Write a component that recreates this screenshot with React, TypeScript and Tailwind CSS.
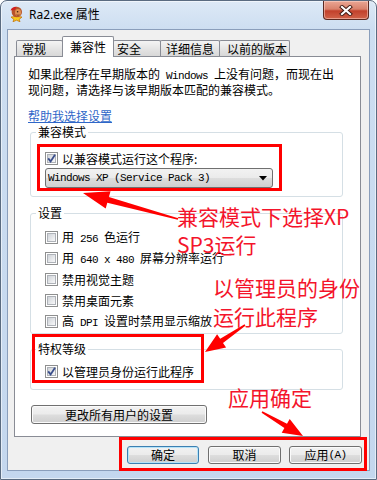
import type { ReactNode } from 'react';

const M = ({ children }: { children: ReactNode }) => (
  <span className="font-['Liberation_Mono',monospace] text-[11px] tracking-[-0.6px]">{children}</span>
);

function CheckBox({ checked = false }: { checked?: boolean }) {
  return (
    <span className="flex h-[13px] w-[13px] shrink-0 items-center justify-center border border-[#8e8f8f] bg-white">
      <span className="relative h-[9px] w-[9px] border border-[#aeb2b8] bg-[linear-gradient(135deg,#cfd3d8,#f8f8f9)]">
        {checked && (
          <svg className="absolute -left-[2px] -top-[2px]" width="11" height="11" viewBox="0 0 11 11">
            <path d="M2.2 5.4 L4.6 8.4 L9 1.8" fill="none" stroke="#3b4f8c" strokeWidth="1.8" />
          </svg>
        )}
      </span>
    </span>
  );
}

function Row({ checked, children }: { checked?: boolean; children: ReactNode }) {
  return (
    <div className="flex h-[13px] items-center">
      <CheckBox checked={checked} />
      <span className="ml-[4px] whitespace-nowrap leading-[14px]">{children}</span>
    </div>
  );
}

function Group({ label, className, children }: { label: string; className: string; children: ReactNode }) {
  return (
    <div className={`relative ml-[2px] w-[313px] rounded-[3px] border border-[#d5dfe5] ${className}`}>
      <span className="absolute -top-[8px] left-[5px] bg-white px-[2px] leading-[14px]">{label}</span>
      {children}
    </div>
  );
}

function Btn({ children, focused, className }: { children: ReactNode; focused?: boolean; className: string }) {
  return (
    <div
      className={`flex items-center justify-center rounded-[3px] border bg-[linear-gradient(to_bottom,#f2f2f2_0%,#ebebeb_48%,#dddddd_52%,#cfcfcf_100%)] leading-[14px] ${
        focused ? 'border-[#3c7fb1] shadow-[inset_0_0_0_1px_#b5e3f8]' : 'border-[#707070] shadow-[inset_0_0_0_1px_#fbfbfb]'
      } ${className}`}
    >
      {children}
    </div>
  );
}

function Tab({ label, active, className }: { label: string; active?: boolean; className: string }) {
  return (
    <div
      className={`flex items-center whitespace-nowrap rounded-t-[2px] border border-b-0 border-[#898c95] leading-[14px] ${
        active
          ? 'relative z-10 -mb-px h-[21px] justify-center bg-white'
          : 'h-[16px] bg-[linear-gradient(to_bottom,#f4f4f4,#e2e2e2_60%,#d8d8d8)]'
      } ${className}`}
    >
      {label}
    </div>
  );
}

function AppIcon() {
  return (
    <svg width="17" height="17" viewBox="0 0 17 17">
      <polygon points="8.5,8 10.2,11.6 14,12 11.2,14.4 12,16.8 8.5,15.2 5,16.8 5.8,14.4 3,12 6.8,11.6" fill="#f6c81c" stroke="#c06a00" strokeWidth="0.7" />
      <circle cx="8.8" cy="7" r="5.2" fill="#b8542a" />
      <ellipse cx="10" cy="7.5" rx="3" ry="3.4" fill="#e09050" />
      <path d="M2.5 5.5 Q4 1.5 8.5 1.8 L7 5 Z" fill="#d11f1f" />
      <circle cx="9.6" cy="6.8" r="0.8" fill="#3a1a0a" />
      <path d="M8.5 9.8 Q10 10.8 11.5 9.8" stroke="#6a2a10" strokeWidth="0.8" fill="none" />
    </svg>
  );
}

export default function App() {
  return (
    <div className="relative h-[480px] w-[377px] overflow-hidden font-['Noto_Sans_CJK_SC',sans-serif] text-[12px] text-black">
      <div className="flex h-full flex-col rounded-t-[7px] border border-[#5a6b80] bg-[linear-gradient(to_bottom,#dde9f6_0px,#cddef1_28px,#c4d7ee_100%)] shadow-[inset_0_0_0_1px_rgba(255,255,255,0.55)]">
        {/* title bar */}
        <div className="flex h-[28px] shrink-0 items-start">
          <div className="ml-[7px] mt-[4px]">
            <AppIcon />
          </div>
          <div className="ml-[4px] mt-[7px] whitespace-nowrap font-['Noto_Sans','Noto_Sans_CJK_SC',sans-serif] leading-[14px]">
            Ra2.exe 属性
          </div>
          <div className="ml-auto mr-[7px] flex h-[19px] w-[46px] items-center justify-center rounded-b-[4px] border border-t-0 border-[#5b2a22] bg-[linear-gradient(to_bottom,#eaa694_0%,#d9826c_45%,#c2412c_55%,#d1634a_100%)] shadow-[inset_0_0_0_1px_rgba(255,220,210,0.5)]">
            <svg width="14" height="11" viewBox="0 0 14 11">
              <path d="M3 2 L11 9 M11 2 L3 9" stroke="#3d1710" strokeWidth="4" strokeLinecap="square" />
              <path d="M3 2 L11 9 M11 2 L3 9" stroke="#ffffff" strokeWidth="2.2" strokeLinecap="square" />
            </svg>
          </div>
        </div>

        {/* client area */}
        <div className="mx-[6px] flex h-[442px] flex-col border border-[#8a9ebb] bg-[#f0f0f0] pl-[6px] pr-[8px] pt-[6px]">
          <div className="flex h-[20px] items-end">
            <Tab label="常规" className="ml-[2px] w-[47px] pl-[5px]" />
            <Tab label="兼容性" active className="-ml-px w-[52px]" />
            <Tab label="安全" className="-ml-px w-[48px] pl-[3px]" />
            <Tab label="详细信息" className="-ml-px w-[60px] pl-[5px]" />
            <Tab label="以前的版本" className="-ml-px w-[71px] pl-[7px]" />
          </div>

          <div className="flex h-[381px] w-[347px] flex-col border border-[#898c95] bg-white pl-[13px] pt-[10px]">
            <div className="whitespace-nowrap leading-[14px]">
              如果此程序在早期版本的<M> Windows </M>上没有问题，而现在出
            </div>
            <div className="whitespace-nowrap leading-[14px]">现问题，请选择与该早期版本匹配的兼容模式。</div>
            <div className="mt-[12px] w-fit leading-[14px] text-[#2f67c8] underline">帮助我选择设置</div>

            <Group label="兼容模式" className="mt-[9px] h-[65px] pl-[14px] pt-[19px]">
              <Row checked>以兼容模式运行这个程序:</Row>
              <div className="mt-[3px] flex h-[20px] w-[228px] items-center justify-between rounded-[3px] border border-[#707070] bg-[linear-gradient(to_bottom,#f2f2f2_0%,#ebebeb_48%,#dddddd_52%,#cfcfcf_100%)] pl-[2px] pr-[5px]">
                <span className="whitespace-nowrap font-['Liberation_Mono',monospace] text-[11px] tracking-[-0.6px]">
                  Windows XP (Service Pack 3)
                </span>
                <svg width="8" height="5" viewBox="0 0 8 5">
                  <polygon points="0,0 8,0 4,4.5" fill="#000" />
                </svg>
              </div>
            </Group>

            <Group label="设置" className="mt-[16px] flex h-[121px] flex-col gap-[8px] pl-[14px] pt-[17px]">
              <Row>
                用<M> 256 </M>色运行
              </Row>
              <Row>
                用<M> 640 x 480 </M>屏幕分辨率运行
              </Row>
              <Row>禁用视觉主题</Row>
              <Row>禁用桌面元素</Row>
              <Row>
                高<M> DPI </M>设置时禁用显示缩放
              </Row>
            </Group>

            <Group label="特权等级" className="mt-[15px] h-[41px] pl-[14px] pt-[15px]">
              <Row checked>以管理员身份运行此程序</Row>
            </Group>

            <Btn className="ml-[3px] mt-[15px] h-[19px] w-[176px]">更改所有用户的设置</Btn>
          </div>

          <div className="-mr-px mt-[9px] flex justify-end">
            <Btn focused className="h-[18px] w-[72px]">
              确定
            </Btn>
            <Btn className="ml-[9px] h-[18px] w-[73px]">取消</Btn>
            <Btn className="ml-[8px] h-[18px] w-[73px]">
              应用<M>(A)</M>
            </Btn>
          </div>
        </div>
      </div>

      {/* annotations */}
      <div className="absolute left-[37px] top-[144px] h-[47px] w-[245px] border-[3px] border-[#ff0000]" />
      <div className="absolute left-[32px] top-[334px] h-[49px] w-[172px] border-[3px] border-[#ff0000]" />
      <div className="absolute left-[119px] top-[437px] h-[34px] w-[248px] border-[3px] border-[#ff0000]" />

      <div className="absolute left-[177px] top-[202px] whitespace-nowrap text-[21px] leading-[28px] text-[#f4142b]">
        兼容模式下选择XP
        <br />
        SP3运行
      </div>
      <div className="absolute left-[213px] top-[273px] whitespace-nowrap text-[21px] leading-[29px] text-[#f4142b]">
        以管理员的身份
        <br />
        运行此程序
      </div>
      <div className="absolute left-[228px] top-[383px] whitespace-nowrap text-[21px] leading-[28px] text-[#f4142b]">
        应用确定
      </div>

      <svg className="pointer-events-none absolute left-0 top-0" width="377" height="480" viewBox="0 0 377 480">
        <polygon
          points="83,193 110.5,191.2 108.9,197 178.2,218.2 177.8,219.8 107.3,202.8 105.7,208.6"
          fill="#ff0000"
        />
        <polygon
          points="205,352 217.1,334.2 220.2,338.7 244.6,324.3 245.4,325.7 223,342.9 226.1,347.4"
          fill="#ff0000"
        />
        <polygon
          points="303,436 289.7,419 287,423.7 262.4,411.3 261.6,412.7 284.4,428.1 281.7,432.8"
          fill="#ff0000"
        />
      </svg>
    </div>
  );
}
